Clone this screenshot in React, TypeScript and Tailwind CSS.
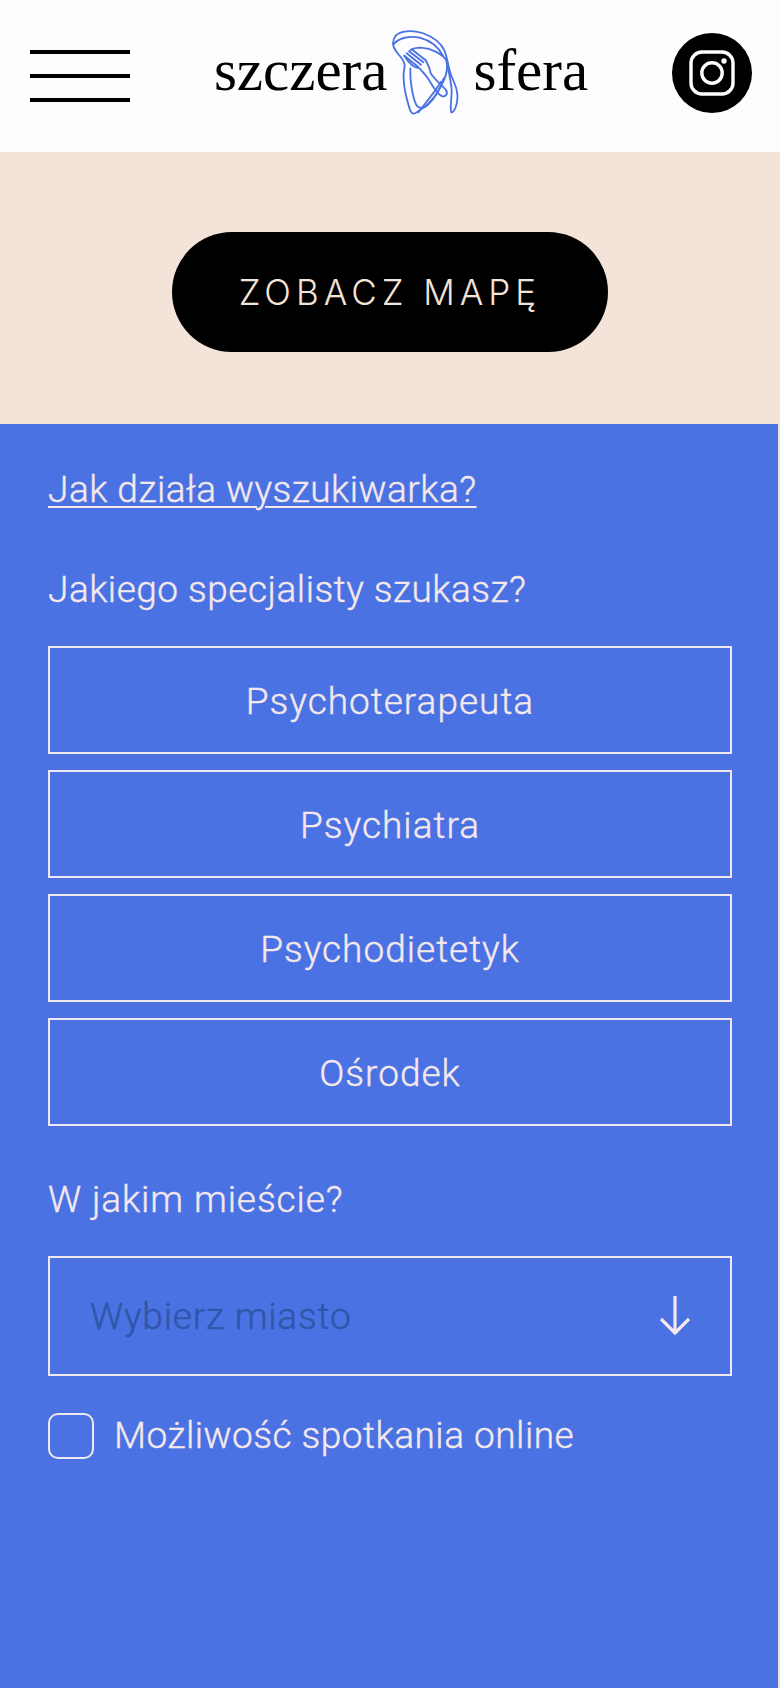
const SPECIALISTS = ["Psychoterapeuta", "Psychiatra", "Psychodietetyk", "Ośrodek"];

function LogoMark() {
  return (
    <svg viewBox="0 0 240 285" className="w-[80px] h-[95px] shrink-0 -ml-[2px] -mt-[7px]" fill="none" stroke="#4a72e2" strokeWidth="5.5" strokeLinecap="round" strokeLinejoin="round">
      {/* outer scribble */}
      <path d="M32 32C45 18 80 14 112 24C140 34 165 48 178 76C188 100 188 122 198 150C212 182 222 205 216 232C212 250 206 262 199 262C194 250 200 225 200 195C198 165 190 135 184 108" />
      <path d="M32 32C22 46 20 62 34 80C50 100 62 110 58 130C52 160 60 205 72 245C76 262 82 270 92 264C112 252 140 232 158 200C172 176 190 150 186 108C172 86 140 70 108 68C96 68 84 70 76 76" />
      <path d="M26 58C40 38 74 32 104 38C134 46 160 66 174 92" />
      <path d="M76 130C74 170 84 220 94 240C102 252 116 252 128 240C148 222 168 190 176 160" />
      <path d="M100 262C120 236 150 200 168 170" />
      {/* fork */}
      <path d="M58 92L100 126M65 85L108 119M72 79L115 112M80 73L122 106" />
      <path d="M58 92C70 112 86 128 104 130C114 142 122 150 130 162C142 180 156 208 172 214C184 216 190 204 182 194C168 178 150 164 138 146C134 130 128 116 122 106" />
    </svg>
  );
}

function InstagramBadge() {
  return (
    <a href="#" aria-label="Instagram" className="w-[80px] h-[80px] -mt-[6px] rounded-full bg-black flex items-center justify-center">
      <svg viewBox="0 0 46 46" className="w-[46px] h-[46px]" fill="none" stroke="#fff" strokeWidth="3.4">
        <rect x="2" y="2" width="42" height="42" rx="11" />
        <circle cx="23" cy="23" r="10.2" />
        <circle cx="35" cy="11" r="2.7" fill="#fff" stroke="none" />
      </svg>
    </a>
  );
}

export default function App() {
  return (
    <div className="min-h-[1688px] bg-[#f4e3d8] font-['Roboto',sans-serif]">
      <header className="h-[152px] bg-[#fdfcfe] flex items-center justify-between pl-[30px] pr-[28px]">
        <button aria-label="Menu" className="w-[100px] flex flex-col gap-[20px]">
          <span className="block h-[4px] bg-black" />
          <span className="block h-[4px] bg-black" />
          <span className="block h-[4px] bg-black" />
        </button>
        <a href="#" className="flex items-center text-black font-['Liberation_Serif',serif] text-[59px] leading-none">
          <span className="-mt-[11px]">szczera</span>
          <LogoMark />
          <span className="-mt-[11px] ml-[8px]">sfera</span>
        </a>
        <InstagramBadge />
      </header>

      <section className="h-[272px] pt-[8px] flex items-center justify-center">
        <a href="#" className="w-[436px] h-[120px] rounded-full bg-black text-[#f4e3d8] flex items-center justify-center text-[35px] font-light tracking-[5px] font-['Inter',sans-serif]">
          ZOBACZ MAPĘ
        </a>
      </section>

      <main className="w-[778px] h-[1264px] bg-[#4a72e2] px-[48px] pt-[42px] text-[#f4e8ec] text-[37px] leading-[48px] font-light tracking-[0.5px] [-webkit-text-stroke-width:0.4px]">
        <a href="#" className="underline underline-offset-[4px] decoration-2">Jak działa wyszukiwarka?</a>
        <p className="mt-[52px]">Jakiego specjalisty szukasz?</p>
        <div className="mt-[32px] w-[684px] flex flex-col gap-[16px]">
          {SPECIALISTS.map((name) => (
            <button key={name} className="h-[108px] pt-[3px] border-2 border-[#f0e8f0] tracking-[1px]">
              {name}
            </button>
          ))}
        </div>
        <p className="mt-[50px] tracking-[0.9px]">W jakim mieście?</p>
        <div className="mt-[32px] w-[684px] h-[120px] border-2 border-[#f0e8f0] pl-[40px] pr-[40px] flex items-center justify-between">
          <span className="text-[#2f56a8] tracking-[0.8px] pt-[2px]">Wybierz miasto</span>
          <svg viewBox="0 0 30 40" className="w-[30px] h-[40px]" fill="none" stroke="#f4e8ec" strokeWidth="3.2">
            <path d="M15 0V37M1 23L15 37L29 23" />
          </svg>
        </div>
        <label className="mt-[36px] flex items-center gap-[20px]">
          <span className="w-[46px] h-[46px] rounded-[10px] border-2 border-[#f0e8f0]" />
          <span>Możliwość spotkania online</span>
        </label>
      </main>
    </div>
  );
}
